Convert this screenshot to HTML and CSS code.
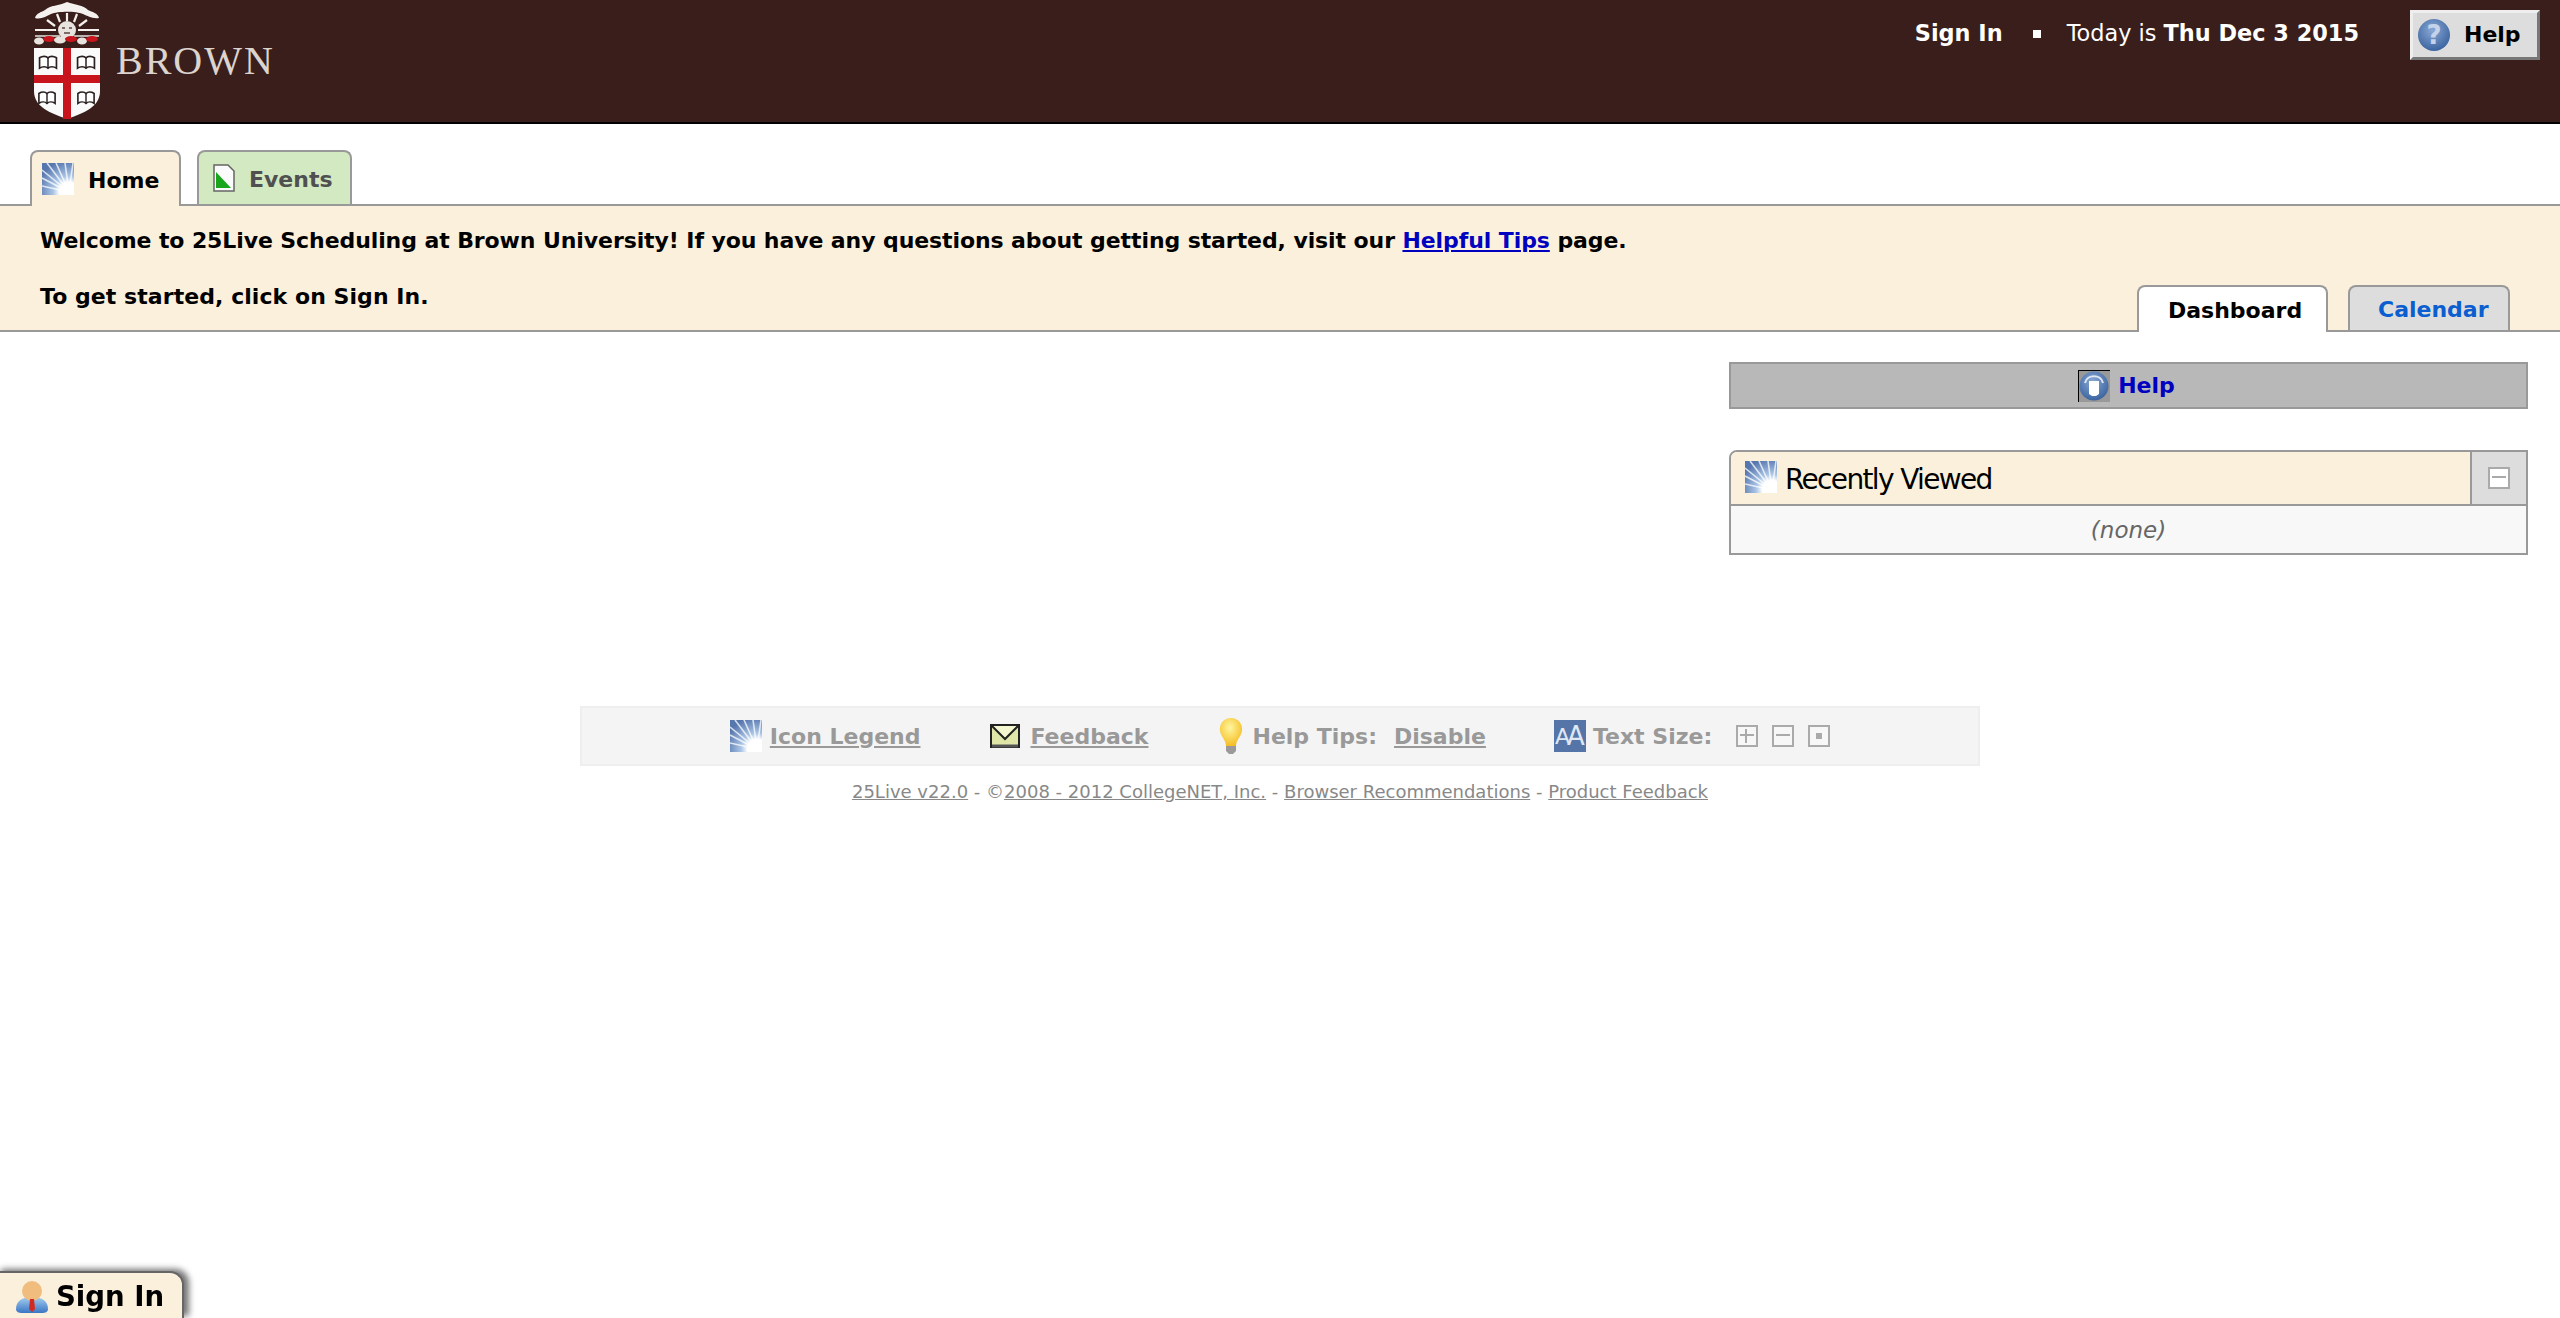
FILE: index.html
```html
<!DOCTYPE html>
<html lang="en">
<head>
<meta charset="utf-8">
<title>25Live - Brown University</title>
<link rel="stylesheet" href="styles.css">
</head>
<body>
<svg class="defs" width="0" height="0" aria-hidden="true">
  <defs>
    <radialGradient id="glow" gradientUnits="userSpaceOnUse" cx="27" cy="29" r="32">
      <stop offset="0" stop-color="#ffffff"/>
      <stop offset="0.3" stop-color="#ffffff"/>
      <stop offset="0.5" stop-color="#a9c4e4"/>
      <stop offset="1" stop-color="#5676ae"/>
    </radialGradient>
    <radialGradient id="ball" cx="0.45" cy="0.35" r="0.75">
      <stop offset="0" stop-color="#8aa8d4"/>
      <stop offset="1" stop-color="#2f5a98"/>
    </radialGradient>
    <radialGradient id="bulbfill" cx="0.45" cy="0.35" r="0.7">
      <stop offset="0" stop-color="#fff6a0"/>
      <stop offset="1" stop-color="#f4b91a"/>
    </radialGradient>
    <linearGradient id="body" x1="0" y1="0" x2="0" y2="1">
      <stop offset="0" stop-color="#a5cdf0"/>
      <stop offset="1" stop-color="#3a76c4"/>
    </linearGradient>
    <symbol id="burst" viewBox="0 0 32 32">
      <rect width="32" height="32" fill="url(#glow)"/>
      <g stroke="#ffffff" stroke-opacity="0.75" stroke-width="1.6">
        <path d="M27 29 L5 0M27 29 L14 0M27 29 L23 0M27 29 L31 0M27 29 L0 7M27 29 L0 15M27 29 L0 23"/>
      </g>
      <circle cx="27" cy="29" r="8" fill="#ffffff"/>
    </symbol>
    <symbol id="book" viewBox="0 0 20 16">
      <path d="M1 3C4 1 8 1 10 3C12 1 16 1 19 3V14C16 12 12 12 10 14C8 12 4 12 1 14Z" fill="#fff" stroke="#2a2020" stroke-width="1.8"/>
      <path d="M10 3V14" stroke="#2a2020" stroke-width="1.6" fill="none"/>
    </symbol>
  </defs>
</svg>

<header class="topbar">
  <a class="brand" href="#">
    <svg class="crest" viewBox="0 0 70 120" width="70" height="120" aria-hidden="true">
      <path d="M3 17C4 12 10 11 13 9C18 4 27 5 35 1C43 4 51 4 56 9C60 11 66 12 67 17C60 18 56 15 51 13C44 10 26 10 19 13C14 15 9 19 3 17Z" fill="#f4f1ee"/>
      <g stroke="#f4f1ee" stroke-width="2.2" fill="none">
        <path d="M35 20V12M28 21L25 13M42 21L45 13M23 25L15 19M47 25L55 19M3 29H24M46 29H67"/>
      </g>
      <circle cx="35" cy="29" r="9" fill="#e8e3de"/>
      <path d="M30 27h3M37 27h3M32 32h6" stroke="#5a4844" stroke-width="1.4"/>
      <path d="M3 35H28M42 35H67" stroke="#e8e3de" stroke-width="1.4"/>
      <ellipse cx="7" cy="40" rx="5" ry="3.5" fill="#e8e3de"/>
      <ellipse cx="17" cy="38" rx="6" ry="3" fill="#c8141c"/>
      <ellipse cx="28" cy="39" rx="6" ry="3.5" fill="#e8e3de"/>
      <ellipse cx="39" cy="38" rx="6" ry="3" fill="#c8141c"/>
      <ellipse cx="50" cy="40" rx="5" ry="3.5" fill="#e8e3de"/>
      <ellipse cx="60" cy="38" rx="6" ry="3" fill="#c8141c"/>
      <path d="M2 47H68V90C68 106 52 112 35 118C18 112 2 106 2 90Z" fill="#fbfafa"/>
      <path d="M31 47h8v71h-8zM2 74h66v8H2z" fill="#c8141c"/>
      <use href="#book" x="6" y="54" width="20" height="15"/>
      <use href="#book" x="44" y="54" width="20" height="15"/>
      <use href="#book" x="6" y="89" width="18" height="16"/>
      <use href="#book" x="45" y="89" width="18" height="16"/>
    </svg>
    <span class="brand-name">BROWN</span>
  </a>
  <div class="topnav">
    <a class="signin-link" href="#">Sign In</a>
    <span class="bullet"></span>
    <span class="today">Today is <b>Thu Dec 3 2015</b></span>
    <a class="help-btn" href="#">
      <svg class="q-icon" viewBox="0 0 32 32" width="32" height="32" aria-hidden="true">
        <circle cx="16" cy="16" r="16" fill="url(#ball)"/>
        <text x="16" y="25" text-anchor="middle" class="q-mark">?</text>
      </svg>
      <span>Help</span>
    </a>
  </div>
</header>

<nav class="tabs">
  <a class="tab tab-home" href="#"><svg class="ico32"><use href="#burst"/></svg><span>Home</span></a>
  <a class="tab tab-events" href="#">
    <svg class="doc" viewBox="0 0 22 28" width="22" height="28" aria-hidden="true">
      <path d="M1 1H15L21 7V27H1Z" fill="#fbfbfb" stroke="#666" stroke-width="1.5"/>
      <path d="M3 8L18 24H3Z" fill="#19a51c"/>
    </svg>
    <span>Events</span>
  </a>
</nav>

<section class="banner">
  <div class="banner-text">
    <p class="banner-line">Welcome to 25Live Scheduling at Brown University! If you have any questions about getting started, visit our <a href="#">Helpful Tips</a> page.</p>
    <p class="banner-line banner-line-wide">To get started, click on Sign In.</p>
  </div>
  <div class="subtabs">
    <a class="subtab subtab-on" href="#">Dashboard</a>
    <a class="subtab subtab-off" href="#">Calendar</a>
  </div>
</section>

<main class="content">
  <aside class="side">
    <div class="helpbar">
      <svg class="helpbar-icon" viewBox="0 0 32 32" width="32" height="32" aria-hidden="true">
        <rect width="32" height="32" fill="#999"/>
        <path d="M0 32V0H32" stroke="#000" stroke-width="2" fill="none"/>
        <circle cx="16" cy="16" r="14.5" fill="url(#ball)"/>
        <path d="M7 13C9 4 23 4 25 13" stroke="#dfe7f3" stroke-width="2" fill="none"/>
        <path d="M11 11H21V24L18 26H14L11 24Z" fill="#ffffff"/>
      </svg>
      <a href="#">Help</a>
    </div>
    <div class="panel">
      <div class="panel-head">
        <div class="panel-title"><svg class="ico32"><use href="#burst"/></svg><span>Recently Viewed</span></div>
        <div class="panel-toggle"><span class="sq sq-panel"><i class="bar-h"></i></span></div>
      </div>
      <div class="panel-body">(none)</div>
    </div>
  </aside>
</main>

<footer class="foot">
  <div class="toolbar">
    <span class="tool"><svg class="ico32"><use href="#burst"/></svg><a href="#">Icon Legend</a></span>
    <span class="tool tool-mail"><svg class="mail" viewBox="0 0 30 24" width="30" height="24" aria-hidden="true">
      <rect x="1" y="1" width="28" height="22" fill="#dfe6a8" stroke="#222" stroke-width="2"/>
      <path d="M2 2L15 15L28 2" fill="#f4f6d0" stroke="#222" stroke-width="2"/>
      <path d="M2 22H28" stroke="#555" stroke-width="3"/>
    </svg><a href="#">Feedback</a></span>
    <span class="tool tool-tips"><svg class="bulb" viewBox="0 0 30 36" width="30" height="36" aria-hidden="true">
      <path d="M15 0C23 0 27 7 26 13C25 19 20 22 20 28H10C10 22 5 19 4 13C3 7 7 0 15 0Z" fill="url(#bulbfill)"/>
      <path d="M10 28H20V33L17 36H13L10 33Z" fill="#9a9a9a"/>
    </svg><b>Help Tips:</b><a class="gap-link" href="#">Disable</a></span>
    <span class="tool tool-size"><svg class="aa" viewBox="0 0 32 32" width="32" height="32" aria-hidden="true">
      <rect width="32" height="32" fill="#5574a8"/>
      <text x="8.5" y="24" text-anchor="middle" class="aa-small">A</text>
      <text x="22" y="25" text-anchor="middle" class="aa-big">A</text>
    </svg><b>Text Size:</b>
      <span class="sizes">
        <span class="sq"><i class="bar-h"></i><i class="bar-v"></i></span>
        <span class="sq"><i class="bar-h"></i></span>
        <span class="sq"><i class="dot"></i></span>
      </span>
    </span>
  </div>
  <p class="legal"><a href="#">25Live v22.0</a> - ©<a href="#">2008 - 2012 CollegeNET, Inc.</a> - <a href="#">Browser Recommendations</a> - <a href="#">Product Feedback</a></p>
</footer>

<a class="signin-tab" href="#">
  <svg class="person" viewBox="0 0 32 32" width="32" height="32" aria-hidden="true">
    <path d="M0 28C0 20 6 16 16 16C26 16 32 20 32 28C32 31 29 32 26 32H6C3 32 0 31 0 28Z" fill="url(#body)"/>
    <circle cx="16" cy="10" r="10" fill="#f0bd7e"/>
    <path d="M14 18H18L19 28L16 31L13 28Z" fill="#d22a22"/>
  </svg>
  <span>Sign In</span>
</a>
</body>
</html>
```

FILE: styles.css
```css
* { box-sizing: border-box; }
html, body { margin: 0; padding: 0; }
body {
  font-family: "DejaVu Sans", Verdana, sans-serif;
  background: #fff;
  color: #000;
  height: 1318px;
  overflow: hidden;
}
.defs { display: block; height: 0; }
.ico32 { width: 32px; height: 32px; flex: none; display: block; }

/* top bar */
.topbar {
  height: 124px;
  background: #3a1e1b;
  border-bottom: 2px solid #000;
  display: flex;
  justify-content: space-between;
  align-items: flex-start;
  padding: 0 20px 0 32px;
}
.brand { display: flex; align-items: flex-start; text-decoration: none; }
.crest { display: block; margin-top: 1px; }
.brand-name {
  font-family: "Liberation Serif", serif;
  font-size: 40px;
  line-height: 40px;
  letter-spacing: 2px;
  color: #dcd4cf;
  margin: 41px 0 0 14px;
}
.topnav { display: flex; align-items: flex-start; color: #fff; font-size: 22.4px; line-height: 28px; }
.signin-link { color: #fff; font-weight: bold; text-decoration: none; margin-top: 19px; }
.bullet { width: 8px; height: 8px; background: #fff; margin: 30px 26px 0 30px; }
.today { margin-top: 19px; margin-right: 51px; }
.help-btn {
  display: flex;
  align-items: center;
  gap: 14px;
  width: 130px;
  height: 50px;
  margin-top: 10px;
  padding-left: 5px;
  background: #ddd;
  border: 3px solid;
  border-color: #eee #777 #777 #eee;
  color: #000;
  font-weight: bold;
  font-size: 22px;
  text-decoration: none;
}
.q-icon { display: block; flex: none; }
.q-mark { font: bold 26px "DejaVu Sans", sans-serif; fill: #c4d3ea; }

/* main tabs */
.tabs {
  display: flex;
  gap: 16px;
  height: 80px;
  padding: 26px 0 0 30px;
  position: relative;
  z-index: 1;
}
.tab {
  display: flex;
  align-items: center;
  height: 56px;
  border: 2px solid #999;
  border-bottom: 0;
  border-radius: 8px 8px 0 0;
  font-size: 22px;
  font-weight: bold;
  text-decoration: none;
}
.tab span { padding-top: 2px; }
.tab-home { width: 151px; padding: 0 0 0 10px; gap: 14px; background: #fbf0dc; color: #000; }
.tab-events { width: 155px; height: 54px; padding: 0 0 0 14px; gap: 14px; background: #d2e9c2; color: #505050; }
.doc { display: block; flex: none; }

/* banner */
.banner {
  height: 128px;
  background: #fbf0dc;
  border-top: 2px solid #999;
  border-bottom: 2px solid #999;
  display: flex;
  justify-content: space-between;
  align-items: flex-end;
  padding: 0 50px 0 40px;
}
.banner-text { align-self: flex-start; padding-top: 21px; }
.banner-line { margin: 0 0 28px; font-size: 22px; line-height: 28px; font-weight: bold; white-space: nowrap; letter-spacing: -0.09px; }
.banner-line-wide { letter-spacing: 0.06px; }
.banner-line a { color: #0000c0; }
.subtabs { display: flex; gap: 20px; margin-bottom: -2px; position: relative; }
.subtab {
  display: flex;
  align-items: center;
  height: 47px;
  padding-top: 2px;
  border: 2px solid #999;
  border-bottom: 0;
  border-radius: 8px 8px 0 0;
  font-size: 22px;
  font-weight: bold;
  text-decoration: none;
}
.subtab-on { width: 191px; padding-left: 29px; background: #fff; color: #000; }
.subtab-off { width: 162px; height: 45px; padding-left: 28px; background: #ddd; color: #0b5ed0; }

/* side column */
.content { display: flex; justify-content: flex-end; padding: 30px 32px 0 0; height: 374px; }
.side { width: 799px; }
.helpbar {
  height: 47px;
  background: #b8b8b8;
  border: 2px solid #999;
  display: flex;
  align-items: center;
  justify-content: center;
  gap: 8px;
  padding-right: 4px;
  font-size: 22px;
  font-weight: bold;
}
.helpbar a { color: #0000c0; text-decoration: none; }
.helpbar-icon { display: block; }
.panel { margin-top: 41px; border: 2px solid #999; border-radius: 8px 0 0 0; overflow: hidden; }
.panel-head { display: flex; height: 54px; border-bottom: 2px solid #999; background: #fbf0dc; }
.panel-title { flex: 1; display: flex; align-items: center; gap: 8px; padding: 2px 0 0 14px; font-size: 28px; letter-spacing: -1.65px; }
.panel-title .ico32 { margin-top: -4px; }
.panel-toggle { width: 56px; background: #ddd; border-left: 2px solid #999; display: flex; align-items: center; justify-content: center; }
.panel-body { height: 47px; background: #f8f8f8; color: #666; font-size: 23px; font-style: italic; display: flex; align-items: center; justify-content: center; }

/* icon squares */
.sq { position: relative; display: block; width: 22px; height: 22px; border: 2px solid #aaa; background: #f7f7f7; }
.sq-panel { background: #fff; }
.bar-h { position: absolute; left: 2px; right: 2px; top: 7px; height: 2px; background: #aaa; }
.bar-v { position: absolute; top: 2px; bottom: 2px; left: 7px; width: 2px; background: #aaa; }
.dot { position: absolute; left: 6px; top: 6px; width: 6px; height: 6px; background: #aaa; }

/* footer */
.foot { width: 1400px; margin: 0 auto; }
.toolbar {
  height: 60px;
  background: #f4f4f4;
  border: 2px solid #eee;
  display: flex;
  align-items: center;
  justify-content: center;
  gap: 70px;
  color: #999;
  font-size: 22px;
}
.tool { display: flex; align-items: center; gap: 8px; font-weight: bold; white-space: nowrap; }
.tool a { color: #999; }
.tool-mail { gap: 10px; }
.tool-tips { gap: 6px; margin-left: -2px; }
.tool-size { margin-left: -2px; gap: 7px; }
.tool .gap-link { margin-left: 11px; }
.mail, .bulb, .aa { display: block; flex: none; }
.aa-small { font: 22px "DejaVu Sans", sans-serif; fill: #dfe7f3; }
.aa-big { font: 26px "DejaVu Sans", sans-serif; fill: #dfe7f3; }
.sizes { display: flex; gap: 14px; margin-left: 17px; }
.legal { margin: 14px 0 0; text-align: center; color: #888; font-size: 18px; line-height: 24px; }
.legal a { color: #888; }

/* docked sign-in */
.signin-tab {
  position: fixed;
  left: -4px;
  bottom: 0;
  width: 188px;
  height: 47px;
  display: flex;
  align-items: center;
  gap: 8px;
  padding: 2px 0 0 18px;
  background: #fbf0dc;
  border: 2px solid #666;
  border-bottom: 0;
  border-radius: 0 14px 0 0;
  box-shadow: 5px -2px 6px rgba(0,0,0,.55);
  font-size: 27.6px;
  font-weight: bold;
  color: #000;
  text-decoration: none;
}
.person { display: block; flex: none; }
```
